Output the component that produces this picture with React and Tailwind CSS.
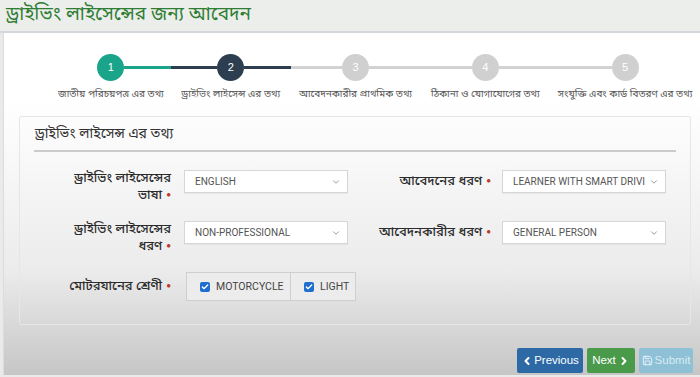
import React from "react";
import { ChevronDown, ChevronLeft, ChevronRight, Save, Check } from "lucide-react";

const bn = { fontFamily: '"Noto Sans Bengali", "Noto Sans", "Liberation Sans", sans-serif' };

const steps = [
  { n: 1, label: "জাতীয় পরিচয়পত্র এর তথ্য", w: "w-[120px]" },
  { n: 2, label: "ড্রাইভিং লাইসেন্স এর তথ্য", w: "w-[120px]" },
  { n: 3, label: "আবেদনকারীর প্রাথমিক তথ্য", w: "w-[130px]" },
  { n: 4, label: "ঠিকানা ও যোগাযোগের তথ্য", w: "w-[130px]" },
  { n: 5, label: "সংযুক্তি এবং কার্ড বিতরণ এর তথ্য", w: "w-[150px]" },
];

function lineColor(n, side) {
  if (n === 1 && side === "r") return "bg-[#1aa58a]";
  if (n === 2) return "bg-[#2c3e50]";
  return "bg-[#d2d2d2]";
}

function circleColor(n) {
  if (n === 1) return "bg-[#1aa58a]";
  if (n === 2) return "bg-[#2c3e50]";
  return "bg-[#d0d0d0]";
}

function Stepper() {
  return (
    <div className="flex pl-[47px] pt-[21px]">
      {steps.map((s, i) => (
        <div key={s.n} className={`${s.w} flex flex-col items-center`}>
          <div className="flex items-center w-full">
            <div className={`flex-1 h-[3px] ${i === 0 ? "bg-transparent" : lineColor(s.n, "l")}`} />
            <div className={`w-[27px] h-[27px] rounded-full ${circleColor(s.n)} flex items-center justify-center text-white text-[11px] font-['Liberation_Sans']`}>
              {s.n}
            </div>
            <div className={`flex-1 h-[3px] ${i === 4 ? "bg-transparent" : lineColor(s.n, "r")}`} />
          </div>
          <div className="mt-[6px] text-[10px] text-[#555] whitespace-nowrap" style={bn}>
            {s.label}
          </div>
        </div>
      ))}
    </div>
  );
}

function Req() {
  return <span className="text-[#c0392b] text-[8px] ml-[4px] align-middle">●</span>;
}

function Select({ value }) {
  return (
    <div className="w-[164px] h-[23px] bg-white border border-[#d6d6d6] flex items-center pl-[10px] pr-[6px] shadow-[0_1px_1px_rgba(0,0,0,0.04)]">
      <span className="flex-1 text-[10px] text-[#555] font-['Roboto'] whitespace-nowrap">{value}</span>
      <ChevronDown className="w-[10px] h-[10px] text-[#888] shrink-0" strokeWidth={2} />
    </div>
  );
}

function Label({ lines, w }) {
  return (
    <div className={`${w} text-right text-[13px] leading-[17px] text-[#2b2b2b] font-medium`} style={bn}>
      {lines.map((l, i) => (
        <div key={i}>
          {l}
          {i === lines.length - 1 && <Req />}
        </div>
      ))}
    </div>
  );
}

function Box({ text, w }) {
  return (
    <div className={`${w} h-[29px] flex items-center gap-[6px] pl-[13px] bg-[#ececec] border border-[#cfcfcf]`}>
      <div className="w-[10px] h-[10px] rounded-[2px] bg-[#1e6fcf] flex items-center justify-center shrink-0">
        <Check className="w-[8px] h-[8px] text-white" strokeWidth={4} />
      </div>
      <span className="text-[10.5px] text-[#444] font-['Roboto'] whitespace-nowrap">{text}</span>
    </div>
  );
}

export default function App() {
  return (
    <div className="w-[700px] h-[377px] overflow-hidden bg-[#e9eae9] font-['Liberation_Sans']">
      <div className="h-[33px] bg-[#eceeec] pl-[6px] flex items-center border-b-2 border-[#d3d8dc]">
        <h1 className="text-[19px] font-normal text-[#2e7d32] leading-none" style={bn}>
          ড্রাইভিং লাইসেন্সের জন্য আবেদন
        </h1>
      </div>

      <div className="ml-[3px] h-[342px] bg-linear-to-b from-white from-20% via-[#ebebeb] via-70% to-[#c6c6c6] border-l border-[#dcdcdc]">
        <Stepper />

        <div className="ml-[15px] w-[672px] mt-[14px] h-[209px] border border-[#e6e6e6] rounded-[2px]">
          <div className="mx-[14px] pt-[7px] pb-[5px] pl-[1px] text-[14px] text-[#333] border-b-2 border-[#cbcbcb]" style={bn}>
            ড্রাইভিং লাইসেন্স এর তথ্য
          </div>

          <div className="pt-[18px] flex flex-col gap-[17px]">
            <div className="flex items-start h-[34px]">
              <Label lines={["ড্রাইভিং লাইসেন্সের", "ভাষা"]} w="w-[151px]" />
              <div className="ml-[13px]"><Select value="ENGLISH" /></div>
              <div className="w-[143px] text-right text-[13px] leading-[23px] text-[#2b2b2b] font-medium" style={bn}>
                আবেদনের ধরণ<Req />
              </div>
              <div className="ml-[11px]"><Select value="LEARNER WITH SMART DRIVI" /></div>
            </div>

            <div className="flex items-start h-[34px]">
              <Label lines={["ড্রাইভিং লাইসেন্সের", "ধরণ"]} w="w-[151px]" />
              <div className="ml-[13px]"><Select value="NON-PROFESSIONAL" /></div>
              <div className="w-[143px] text-right text-[13px] leading-[23px] text-[#2b2b2b] font-medium" style={bn}>
                আবেদনকারীর ধরণ<Req />
              </div>
              <div className="ml-[11px]"><Select value="GENERAL PERSON" /></div>
            </div>

            <div className="flex items-center">
              <Label lines={["মোটরযানের শ্রেণী"]} w="w-[151px]" />
              <div className="ml-[15px] flex">
                <Box text="MOTORCYCLE" w="w-[105px]" />
                <Box text="LIGHT" w="w-[66px] -ml-px" />
              </div>
            </div>
          </div>
        </div>

        <div className="flex justify-end gap-[4px] pr-[7px] mt-[23px]">
          <button className="h-[25px] w-[66px] rounded-[2px] bg-[#2d6aa5] text-white text-[11.5px] flex items-center justify-center gap-[1px]">
            <ChevronLeft className="w-[12px] h-[12px]" strokeWidth={4} />
            Previous
          </button>
          <button className="h-[25px] w-[48px] rounded-[2px] bg-[#4a9a4b] text-white text-[11.5px] flex items-center justify-center gap-[2px]">
            Next
            <ChevronRight className="w-[12px] h-[12px]" strokeWidth={4} />
          </button>
          <button className="h-[25px] w-[54px] rounded-[2px] bg-[#8ec0d6] text-[#d9ecf4] text-[11.5px] flex items-center justify-center gap-[2px]">
            <Save className="w-[11px] h-[11px]" strokeWidth={2.5} />
            Submit
          </button>
        </div>
      </div>
    </div>
  );
}
